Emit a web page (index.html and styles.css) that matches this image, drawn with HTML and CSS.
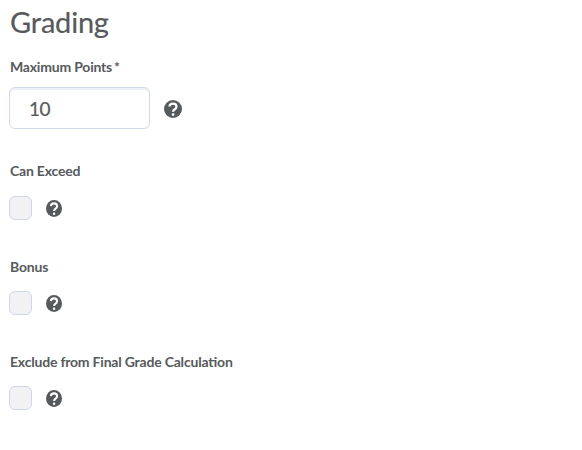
FILE: index.html
```html
<!DOCTYPE html>
<html lang="en">
<head>
<meta charset="utf-8">
<title>Grading</title>
<link rel="stylesheet" href="styles.css">
</head>
<body>
<svg width="0" height="0" class="defs"><symbol id="help" viewBox="0 0 18 18" preserveAspectRatio="none"><circle cx="9" cy="9" r="9" fill="#565a5c"/><path d="M5.500 6.500C5.700 2.700 12.500 2.600 12.500 6.700C12.500 9.300 9.100 9.200 9.100 11.700" fill="none" stroke="#fff" stroke-width="2.300"/><circle cx="9.100" cy="14.600" r="1.350" fill="#fff"/></symbol></svg>
<main class="grading">
<h1 class="title">Grading</h1>
<section class="field points">
<label class="label" for="points">Maximum Points<span class="required">*</span></label>
<div class="row"><input class="input" id="points" type="text" value="10"><svg class="help large"><use href="#help"/></svg></div>
</section>
<section class="field exceed">
<label class="label" for="exceed">Can Exceed</label>
<div class="row"><input class="check" id="exceed" type="checkbox"><svg class="help"><use href="#help"/></svg></div>
</section>
<section class="field">
<label class="label" for="bonus">Bonus</label>
<div class="row"><input class="check" id="bonus" type="checkbox"><svg class="help"><use href="#help"/></svg></div>
</section>
<section class="field">
<label class="label" for="exclude">Exclude from Final Grade Calculation</label>
<div class="row"><input class="check" id="exclude" type="checkbox"><svg class="help"><use href="#help"/></svg></div>
</section>
</main>
</body>
</html>
```
FILE: styles.css
```css
* { box-sizing: border-box; }
body { margin: 0; background: #fff; color: #565a5c; font-family: Lato, sans-serif; }
.defs { display: none; }
.grading { padding: 4px 9px; }
.title { margin: 0 0 18px 1px; font-size: 29px; line-height: 36px; font-weight: 400; letter-spacing: -0.2px; -webkit-text-stroke: 0.2px #565a5c; }
.field { height: 95px; }
.points { height: 104px; }
.exceed { height: 96px; }
.label { display: block; margin-left: 1px; font-size: 14px; line-height: 18px; font-weight: 700; letter-spacing: -0.2px; font-feature-settings: "liga" 1; }
.required { margin-left: 2px; }
.row { display: flex; align-items: center; gap: 14px; margin-top: 15px; }
.exceed .row { margin-top: 16px; }
.input { width: 141px; height: 42px; padding: 1px 19px 0; border: 1px solid #d3d9e8; border-radius: 6px; box-shadow: inset 0 2px 0 #edf0f6; font: 19px Lato, sans-serif; letter-spacing: -0.4px; color: #565a5c; -webkit-text-stroke: 0.2px #565a5c; }
.points .row { margin-top: 11px; }
.check { appearance: none; width: 23px; height: 24px; margin: 0; border: 1px solid #cfd6e6; border-radius: 6px; background: #f2f2f5; }
.help { width: 16px; height: 17px; }
.large { width: 18px; height: 18px; position: relative; top: 1px; }
```
